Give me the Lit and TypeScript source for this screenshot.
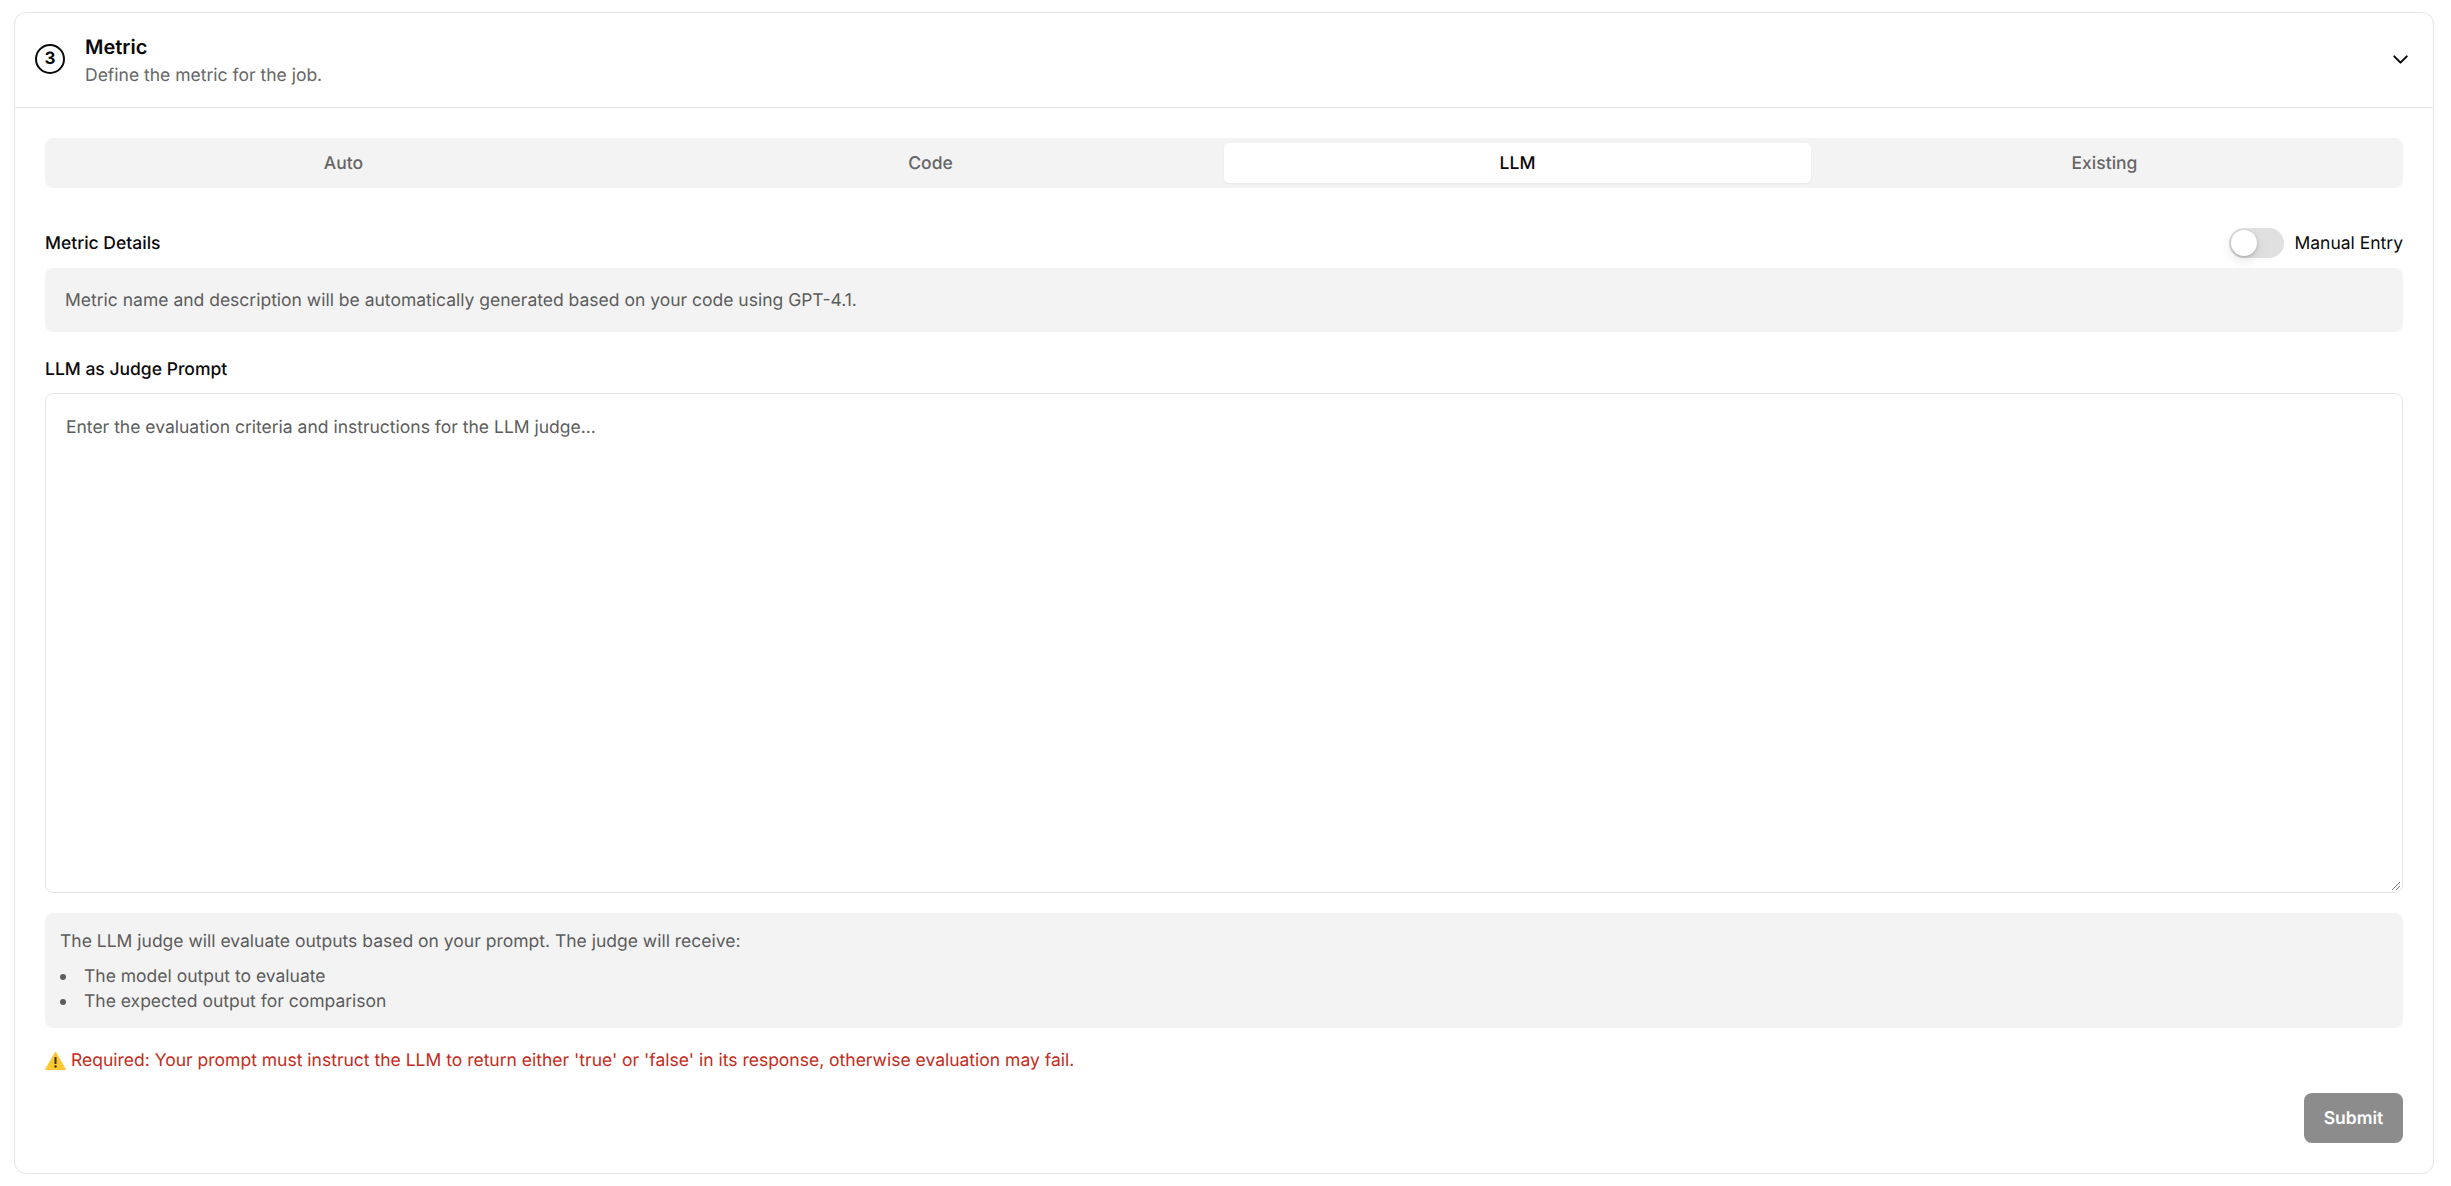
import { LitElement, html, css } from "lit";
import { customElement } from "lit/decorators.js";

@customElement("app-root")
export class AppRoot extends LitElement {
  static styles = css`
    :host { display: block; font-family: Inter, "Liberation Sans", sans-serif; color: #0a0a0a; background: #fff; min-height: 1186px; box-sizing: border-box; padding: 12px 17px 12px 14px; text-rendering: geometricPrecision; }
    * { box-sizing: border-box; }
    .card { border: 1px solid #e5e5e5; border-radius: 12px; height: 1162px; display: flex; flex-direction: column; }
    .head { height: 95px; border-bottom: 1px solid #e5e5e5; display: flex; align-items: center; padding: 0 20px; gap: 20px; flex: none; }
    .num { width: 30px; height: 30px; margin-bottom: 2px; border: 2px solid #0a0a0a; border-radius: 50%; display: flex; align-items: center; justify-content: center; font-size: 17px; font-weight: 700; flex: none; }
    .chev { margin-bottom: 2px; flex: none; }
    .titles { flex: 1; display: flex; flex-direction: column; gap: 2px; }
    .title { font-size: 20px; font-weight: 600; line-height: 28px; }
    .desc { font-size: 17.5px; line-height: 25px; color: #666; }
    .body { flex: 1; padding: 30px; display: flex; flex-direction: column; }
    .tabs { height: 50px; background: #f3f3f3; border-radius: 8px; display: grid; grid-template-columns: repeat(4, 1fr); padding: 5px; flex: none; }
    .tab { display: flex; align-items: center; justify-content: center; font-size: 17.5px; font-weight: 500; color: #666; border-radius: 5px; }
    .tab.on { background: #fff; color: #0a0a0a; box-shadow: 0 1px 2px rgba(0,0,0,.05); }
    .row { display: flex; align-items: center; justify-content: space-between; margin-top: 40px; height: 30px; }
    .label { font-size: 17.5px; font-weight: 500; line-height: 25px; }
    .manual { display: flex; align-items: center; gap: 10px; font-size: 17.5px; }
    .switch { width: 55px; height: 30px; border-radius: 15px; background: #e0e0e0; position: relative; }
    .knob { position: absolute; left: 2px; top: 2px; width: 26px; height: 26px; border-radius: 50%; background: #fff; box-shadow: 0 5px 12px rgba(0,0,0,.1), 0 1px 3px rgba(0,0,0,.2); }
    .note { margin-top: 10px; height: 64px; background: #f3f3f3; border-radius: 8px; padding: 1px 20px 0; display: flex; align-items: center; font-size: 17.5px; color: #5c5c5c; flex: none; }
    .lab2 { margin-top: 25px; height: 24px; }
    .ta { margin-top: 12px; height: 500px; border: 1px solid #e5e5e5; border-radius: 8px; padding: 21px 20px 20px; font-size: 17.5px; line-height: 25px; color: #5c5c5c; position: relative; flex: none; }
    .grip { position: absolute; right: 1px; bottom: 1px; }
    .help { margin-top: 20px; background: #f3f3f3; border-radius: 8px; padding: 16px 15px 14px; font-size: 17.5px; line-height: 25px; color: #5c5c5c; height: 115px; flex: none; }
    .help p { margin: 0 0 10px; }
    .help ul { margin: 0; padding: 0; list-style: none; }
    .help li { display: flex; align-items: center; gap: 18px; }
    .help li::before { content: ""; width: 6px; height: 6px; border-radius: 50%; background: #5c5c5c; flex: none; }
    .warn { margin-top: 20px; font-size: 17.5px; line-height: 25px; color: #c42b20; display: flex; align-items: center; gap: 5px; }
    .foot { margin-top: auto; display: flex; justify-content: flex-end; }
    .btn { width: 99px; height: 50px; border-radius: 8px; background: #8c8c8c; color: #fff; font-size: 17.5px; font-weight: 600; display: flex; align-items: center; justify-content: center; }
  `;

  render() {
    return html`
      <div class="card">
        <div class="head">
          <div class="num">3</div>
          <div class="titles">
            <div class="title">Metric</div>
            <div class="desc">Define the metric for the job.</div>
          </div>
          <svg class="chev" width="25" height="25" viewBox="0 0 24 24" fill="none" stroke="#0a0a0a" stroke-width="2" stroke-linecap="round" stroke-linejoin="round"><path d="m6 9 6 6 6-6"/></svg>
        </div>
        <div class="body">
          <div class="tabs">
            <div class="tab">Auto</div>
            <div class="tab">Code</div>
            <div class="tab on">LLM</div>
            <div class="tab">Existing</div>
          </div>
          <div class="row">
            <div class="label">Metric Details</div>
            <div class="manual"><div class="switch"><div class="knob"></div></div>Manual Entry</div>
          </div>
          <div class="note">Metric name and description will be automatically generated based on your code using GPT-4.1.</div>
          <div class="label lab2">LLM as Judge Prompt</div>
          <div class="ta">Enter the evaluation criteria and instructions for the LLM judge...
            <svg class="grip" width="12" height="12" viewBox="0 0 12 12" stroke="#777" stroke-width="1"><path d="M3 11 11 3M7 11l4-4"/></svg>
          </div>
          <div class="help">
            <p>The LLM judge will evaluate outputs based on your prompt. The judge will receive:</p>
            <ul><li>The model output to evaluate</li><li>The expected output for comparison</li></ul>
          </div>
          <div class="warn"><svg width="21" height="19" viewBox="0 0 21 19"><path d="M10.5 1 20.5 18.5H.5Z" fill="#fbc92f" stroke="#fbc92f" stroke-linejoin="round"/><path d="M10.5 6v7" stroke="#333" stroke-width="2"/><circle cx="10.5" cy="15.5" r="1.2" fill="#333"/></svg>Required: Your prompt must instruct the LLM to return either 'true' or 'false' in its response, otherwise evaluation may fail.</div>
          <div class="foot"><div class="btn">Submit</div></div>
        </div>
      </div>
    `;
  }
}
